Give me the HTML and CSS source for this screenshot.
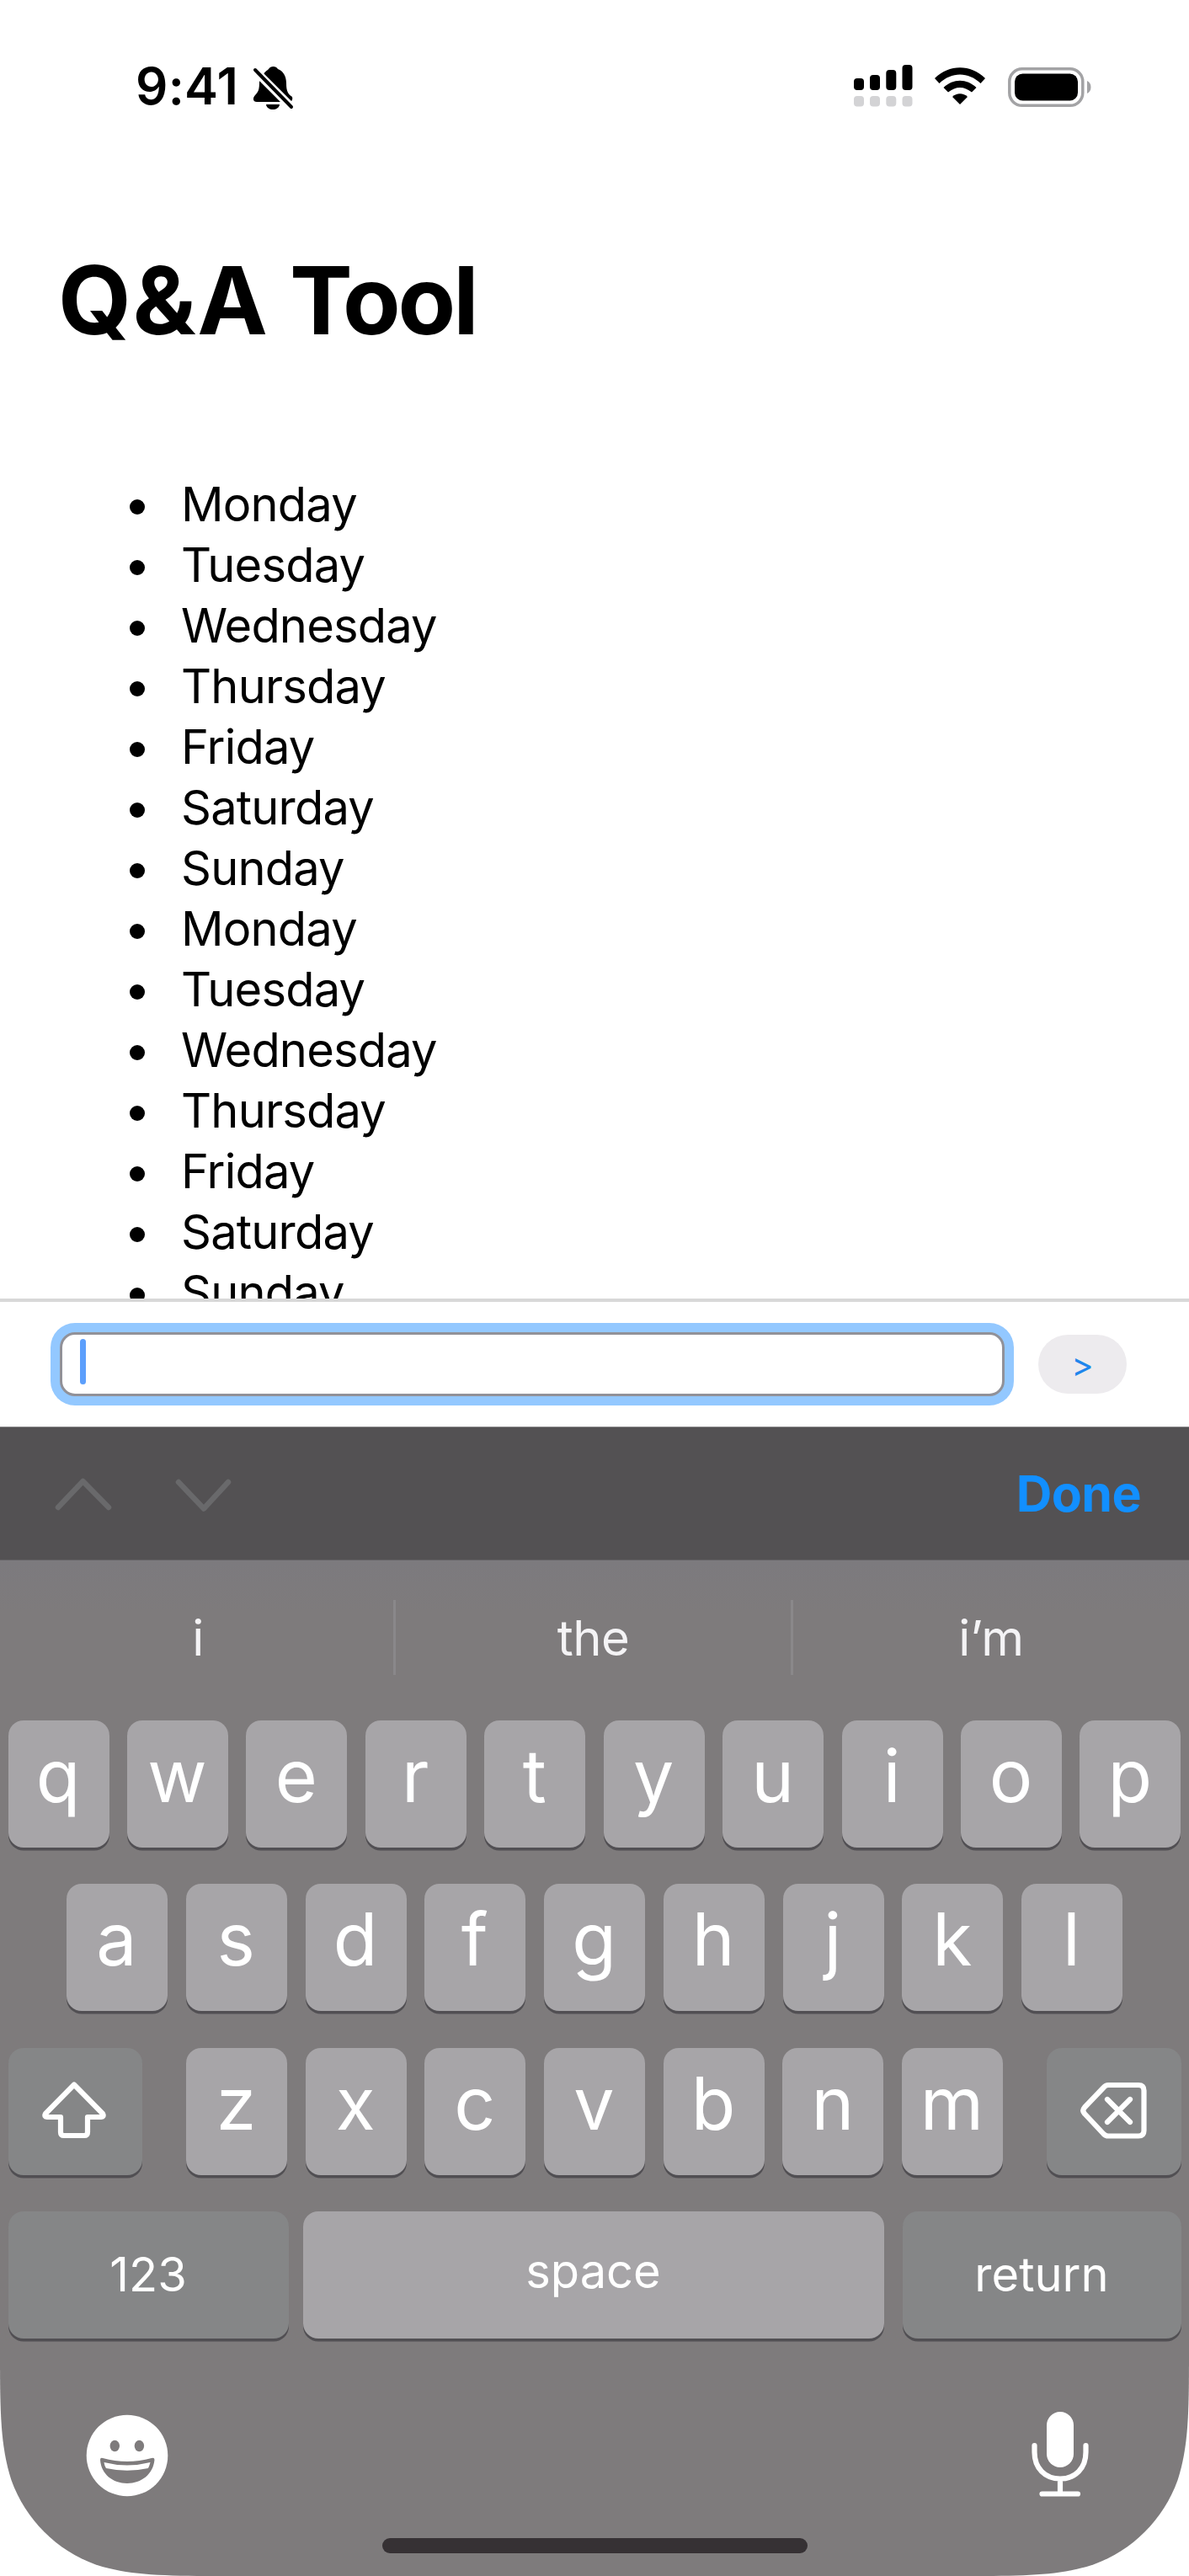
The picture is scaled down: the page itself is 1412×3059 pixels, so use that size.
FILE: index.html
```
<!DOCTYPE html>
<html lang="en">
<head>
<meta charset="utf-8">
<title>Q&amp;A Tool</title>
<link rel="stylesheet" href="styles.css">
</head>
<body>
<div class="phone">
  <header class="status">
    <span class="time">9:41</span>
    <svg class="bell" width="50" height="56" viewBox="0 0 50 56">
      <path d="M12 13C14 8 17 7 19 5C21 1 28 1 30 5C36 7 40 13 40 22C40 31 42 35 47 38C48 42 46 44 43 44H5C0 44 0 39 3 36C7 32 8 29 8 20Z"/>
      <path d="M16 47H32C31 55 17 55 16 47Z"/>
      <path class="bell-gap" d="M2 6L47 51"/>
      <path class="bell-slash" d="M3 6L46 50"/>
    </svg>
    <div class="indicators">
      <svg width="70" height="50" viewBox="0 0 70 50">
        <rect x="0" y="16" width="12" height="14" rx="4"/><rect x="19" y="12" width="12" height="18" rx="4"/><rect x="38.300" y="6" width="12" height="24" rx="4"/><rect x="57.500" y="0" width="12" height="30" rx="4"/>
        <g fill="#d3d3d5"><rect x="0" y="37" width="12" height="12.500" rx="4"/><rect x="19" y="37" width="12" height="12.500" rx="4"/><rect x="38.300" y="37" width="12" height="12.500" rx="4"/><rect x="57.500" y="37" width="12" height="12.500" rx="4"/></g>
      </svg>
      <svg class="wifi" width="60" height="45" viewBox="0 0 60 45">
        <path d="M0 13C17-4 43-4 60 13L54.500 19C40 5 20 5 5.500 19Z"/>
        <path d="M10.500 24C22 13 38 13 49.500 24L44 29.500C35 22 25 22 16 29.500Z"/>
        <path d="M21 35C26 30 34 30 39 35L30 44Z"/>
      </svg>
      <svg class="battery" width="100" height="48" viewBox="0 0 100 48">
        <rect x="1.800" y="1.800" width="87" height="43.500" rx="15" fill="none" stroke="#a3a3a5" stroke-width="3.500"/>
        <rect x="8" y="7.500" width="75" height="32" rx="9.500"/>
        <path d="M94 16C100 18 100 29 94 31Z" fill="#a3a3a5"/>
      </svg>
    </div>
  </header>

  <main class="content">
    <h1><span class="title-lead">Q&amp;A</span> Tool</h1>
    <ul class="days">
      <li>Monday</li><li>Tuesday</li><li>Wednesday</li><li>Thursday</li><li>Friday</li><li>Saturday</li><li>Sunday</li>
      <li>Monday</li><li>Tuesday</li><li>Wednesday</li><li>Thursday</li><li>Friday</li><li>Saturday</li><li>Sunday</li>
    </ul>
  </main>

  <form class="composer">
    <div class="field"><span class="caret"></span></div>
    <button class="send" type="button">&gt;</button>
  </form>

  <div class="accessory">
    <svg width="68" height="44" viewBox="0 0 68 44"><path d="M4 38L33.500 7L64 38"/></svg>
    <svg width="68" height="44" viewBox="0 0 68 44"><path d="M4 8L34 39.500L63 8"/></svg>
    <span class="done">Done</span>
  </div>

  <section class="keyboard">
    <div class="suggestions"><span>i</span><span>the</span><span>i’m</span></div>
    <div class="row"><b>q</b><b>w</b><b>e</b><b>r</b><b>t</b><b>y</b><b>u</b><b>i</b><b>o</b><b>p</b></div>
    <div class="row row-home"><b>a</b><b>s</b><b>d</b><b>f</b><b>g</b><b>h</b><b>j</b><b>k</b><b>l</b></div>
    <div class="row row-lower">
      <div class="special icon-key">
        <svg width="80" height="70" viewBox="0 0 80 70"><path d="M39 3.500L73 38Q75 41.500 71 42H55V60Q55 64 51 64H27Q23 64 23 60V42H7Q3 41.500 5 38Z"/></svg>
      </div>
      <div class="letters"><b>z</b><b>x</b><b>c</b><b>v</b><b>b</b><b>n</b><b>m</b></div>
      <div class="special icon-key">
        <svg width="80" height="70" viewBox="0 0 80 70"><path d="M33 4H69Q75.500 4 75.500 10.500V58Q75.500 64.500 69 64.500H33Q30 64.500 27.500 62L5 38Q1.500 34.500 5 30.500L27.500 7Q30 4 33 4ZM32 21L59 48M59 21L32 48"/></svg>
      </div>
    </div>
    <div class="row row-bottom">
      <div class="special numbers">123</div>
      <div class="space">space</div>
      <div class="special return">return</div>
    </div>
    <footer class="tray">
      <svg width="98" height="98" viewBox="0 0 98 98">
        <circle cx="49" cy="49" r="48.300" fill="#fff"/>
        <g fill="#7e7b7c"><ellipse cx="34.300" cy="37.500" rx="5.700" ry="6.700"/><ellipse cx="63.400" cy="37.500" rx="5.700" ry="6.700"/>
        <path d="M17 54Q17 51 20 52Q49 60 78 52Q81.500 51 81.500 54C80 71 66 82 49 82S18 71 17 54Z"/></g>
        <path d="M21.500 57Q49 64 76.500 57Q75.500 61 74 64Q49 69.500 24 64Q22 61 21.500 57Z" fill="#fff"/>
      </svg>
      <svg width="70" height="104" viewBox="0 0 70 104">
        <rect x="19" y="0" width="32" height="66" rx="16" fill="#fff"/>
        <path d="M4.500 40V48C4.500 67 17 79.500 35 79.500S65.500 67 65.500 48V40M35 80V97M13.500 97.500H56" fill="none" stroke="#fff" stroke-width="6.200" stroke-linecap="round"/>
      </svg>
    </footer>
    <div class="home-bar"></div>
  </section>
</div>
</body>
</html>
```
FILE: styles.css
```
* { box-sizing: border-box; }
body { margin: 0; background: #fff; color: #000; font-family: Inter, "Liberation Sans", sans-serif; }
.phone { width: 1412px; height: 3059px; display: flex; flex-direction: column; overflow: hidden; background: #fff; }
svg { display: block; flex: none; }

.status { height: 280px; flex: none; display: flex; align-items: flex-start; padding: 77px 0 0 161px; }
.time { width: 137px; font-size: 60px; line-height: 50px; font-weight: 600; letter-spacing: .3px; white-space: nowrap; }
.bell { margin-left: 2px; }
.bell-gap { stroke: #fff; stroke-width: 10px; }
.bell-slash { stroke: #000; stroke-width: 4px; stroke-linecap: round; }
.indicators { display: flex; align-items: flex-start; margin-left: 664px; }
.wifi { margin: 3px 27px 0 26px; }
.battery { margin-top: 3px; }

.content { height: 1262px; flex: none; overflow: hidden; padding: 8px 0 0 69px; }
h1 { margin: 0; font-size: 112px; line-height: 136px; font-weight: 700; letter-spacing: -3px; word-spacing: 1px; white-space: nowrap; }
.title-lead { letter-spacing: 1.5px; }
.days { list-style: none; margin: 139px 0 0; padding: 0 0 0 85px; }
.days li { display: flex; align-items: center; gap: 43px; height: 72px; font-size: 56px; line-height: 72px; letter-spacing: -.8px; }
.days li::before { content: ""; width: 18px; height: 18px; margin-top: 6px; border-radius: 50%; background: #000; }

.composer { height: 152px; flex: none; display: flex; align-items: flex-start; gap: 40px; padding: 36px 74px 0 71px; margin: 0; border-top: 4px solid #d8d8d8; background: #fff; }
.field { width: 1122px; height: 76px; padding: 5px 21px; border: 3px solid #919198; border-radius: 18px; box-shadow: 0 0 0 11px #93c8ff; background: #fff; }
.caret { display: block; width: 7px; height: 54px; border-radius: 4px; background: #5c9ffc; }
.send { width: 105px; height: 70px; margin-top: 3px; padding: 2px 0 0; border: 0; border-radius: 35px; background: #edebee; color: #1f86ec; font: 400 40px/60px Inter, sans-serif; }

.accessory { height: 159px; flex: none; display: flex; align-items: center; padding: 0 57px 0 65px; border-top: 1px solid #8c8a8c; border-bottom: 1px solid #646265; background: #535153; }
.accessory svg { margin-right: 75px; fill: none; stroke: #69696b; stroke-width: 6.500px; stroke-linecap: round; stroke-linejoin: round; }
.done { margin-left: auto; font-size: 59px; line-height: 72px; font-weight: 650; letter-spacing: -.6px; color: #128fff; }

.keyboard { height: 1206px; flex: none; display: flex; flex-direction: column; background: linear-gradient(#7c7a7e, #7e7b7c 60px); color: #fff; clip-path: path("M0 0H1412V931C1412 1010 1412 1050 1398.500 1092.300C1381.600 1139 1345 1175.600 1298.300 1192.500C1256 1206 1216 1206 1137 1206H275C196 1206 156 1206 113.700 1192.500C67 1175.600 30.400 1139 13.500 1092.300C0 1050 0 1010 0 931Z"); }
.suggestions { height: 190px; flex: none; display: grid; grid-template-columns: 467px 472px 473px; padding-top: 47px; }
.suggestions span { height: 89px; font-size: 58px; line-height: 91px; text-align: center; color: #f4f3f5; letter-spacing: -.5px; }
.suggestions span + span { border-left: 3px solid #8a888a; }
.suggestions span:first-child { padding-left: 3px; }

.row { height: 151px; flex: none; display: flex; justify-content: space-between; margin: 0 9.500px 43.400px; }
.row b { width: 120px; height: 151px; padding: 9px 1px 0 0; border-radius: 18px; background: #a7a5a8; box-shadow: 0 3.500px 0 #514f53; font-size: 86px; line-height: 114px; font-weight: 400; text-align: center; }
.row-home { margin-left: 79px; margin-right: 79px; }
.letters { width: 970px; display: flex; justify-content: space-between; }
.special, .space { height: 151px; border-radius: 18px; box-shadow: 0 3.500px 0 #514f53; font-size: 56px; line-height: 151px; text-align: center; }
.special { background: #858687; }
.icon-key { width: 159.500px; display: flex; align-items: center; justify-content: center; }
.icon-key svg { fill: none; stroke: #fff; stroke-width: 6.200px; stroke-linecap: round; stroke-linejoin: round; }
.row-bottom { margin-bottom: 0; }
.numbers { width: 333px; }
.space { width: 690px; margin: 0 5px 0 0; background: #a7a5a8; line-height: 142px; }
.return { width: 331px; }

.tray { height: 104px; flex: none; display: flex; justify-content: space-between; align-items: center; margin-top: 86px; padding: 2px 118px 0 102px; }
.home-bar { width: 505px; height: 18px; flex: none; margin: 47px auto 0; border-radius: 9px; background: #363134; }
```
